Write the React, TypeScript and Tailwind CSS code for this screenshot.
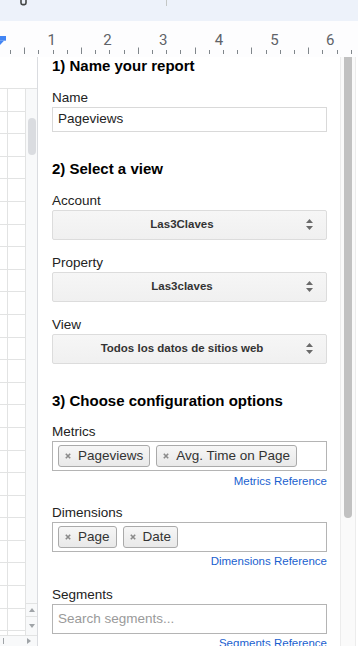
const ticks = Array.from({ length: 25 }, (_, i) => i - 3);
const rows = Array.from({ length: 25 }, (_, i) => i);

function TopStrip() {
  return (
    <div className="flex h-[21px] items-start bg-[#edf2fa]">
      <svg className="ml-[20px]" width="7" height="6" viewBox="0 0 7 6">
        <path d="M1 0V3Q1 4.6 2.6 4.6H4.4Q6 4.6 6 3V0" fill="none" stroke="#444746" strokeWidth="1.6" />
      </svg>
      <div className="ml-[139px] h-[6px] w-px bg-[#c4c7c5]" />
    </div>
  );
}

function Ruler() {
  return (
    <div className="relative h-[36px] bg-[#fdfdfe]">
      <svg className="absolute left-0 top-0" width="358" height="36">
        <path d="M0 15H6V19.7H0Z" fill="#4285f4" />
        <path d="M0 19.7H4L0 24Z" fill="#4285f4" />
        {ticks.map((k) => {
          const x = Math.round(52.5 + 14.2 * k) + 0.5;
          const tall = ((k % 4) + 4) % 4 === 2;
          return <line key={k} x1={x} x2={x} y1={tall ? 26.5 : 29} y2={33} stroke="#80868b" />;
        })}
      </svg>
      <div className="relative flex pl-[24px] pt-[10px]">
        {[1, 2, 3, 4, 5, 6].map((n) => (
          <div key={n} className="w-[56.8px] text-center font-['Roboto',Arial,sans-serif] text-[15px] leading-[18px] text-[#5f6368]">
            {n}
          </div>
        ))}
      </div>
    </div>
  );
}

function Sheet() {
  return (
    <div className="flex w-[38px] flex-col border-r border-[#dadce0]">
      <div className="h-[31px]" />
      <div className="flex h-[547px] overflow-hidden">
        <div className="flex w-[25px] flex-col">
          {rows.map((r) => (
            <div key={r} className="flex h-[22.6px] shrink-0 border-t border-[#e2e3e3]">
              <div className="w-[8px] border-r border-[#e2e3e3]" />
            </div>
          ))}
        </div>
        <div className="flex w-[12px] flex-col border-l border-t border-[#e2e3e3] bg-[#f8f9fa]">
          <div className="ml-[2px] mt-[29px] h-[37px] w-[8px] rounded-full bg-[#dadce0]" />
          <div className="flex-1" />
          <div className="flex h-[14px] items-center justify-center border-y border-[#e2e3e3]">
            <svg width="6" height="4" viewBox="0 0 6 4"><path d="M3 0L6 4H0Z" fill="#a0a4a8" /></svg>
          </div>
          <div className="flex h-[18px] items-center justify-center">
            <svg width="6" height="4" viewBox="0 0 6 4"><path d="M0 0H6L3 4Z" fill="#a0a4a8" /></svg>
          </div>
        </div>
      </div>
      <div className="flex h-[11px] items-center border-t border-[#e2e3e3] bg-[#f8f9fa]">
        <div className="ml-[3px] h-[6px] w-px bg-[#a0a4a8]" />
        <svg className="ml-[23px]" width="4" height="6" viewBox="0 0 4 6"><path d="M0 0L4 3L0 6Z" fill="#a0a4a8" /></svg>
      </div>
    </div>
  );
}

function Heading({ children, className }: { children: React.ReactNode; className: string }) {
  return <div className={`text-[15px] font-bold leading-[17px] text-black ${className}`}>{children}</div>;
}

function Label({ children, className }: { children: React.ReactNode; className: string }) {
  return <div className={`text-[13.5px] leading-[15px] text-[#222] ${className}`}>{children}</div>;
}

function SelectBox({ value }: { value: string }) {
  return (
    <div className="relative mt-[2px] flex h-[30px] items-center rounded-[2px] border border-[#dcdcdc] bg-gradient-to-b from-[#f6f6f6] to-[#f0f0f0]">
      <span className="flex-1 pr-[15px] text-center text-[11.5px] font-bold text-[#333]">{value}</span>
      <svg className="absolute right-[13px] top-[8px]" width="7" height="12" viewBox="0 0 7 12">
        <path d="M3.5 0L7 4H0Z M0 7H7L3.5 11Z" fill="#6a6a6a" />
      </svg>
    </div>
  );
}

function Chip({ label }: { label: string }) {
  return (
    <div className="flex h-[22px] items-center gap-[7px] rounded-[3px] border border-[#aaa] bg-gradient-to-b from-[#f6f6f6] to-[#e9e9e9] pl-[6px] pr-[6px] text-[13.5px] text-[#333]">
      <svg width="6" height="6" viewBox="0 0 6 6">
        <path d="M0.8 0.8L5.2 5.2M5.2 0.8L0.8 5.2" stroke="#8a8a8a" strokeWidth="1.6" />
      </svg>
      <span>{label}</span>
    </div>
  );
}

function ChipBox({ items }: { items: string[] }) {
  return (
    <div className="mt-[2px] flex h-[30px] items-center gap-[6px] border border-[#b4b4b4] px-[5px]">
      {items.map((i) => (
        <Chip key={i} label={i} />
      ))}
    </div>
  );
}

function RefLink({ children, className }: { children: React.ReactNode; className: string }) {
  return <div className={`text-right text-[11.5px] leading-[14px] text-[#1a5fcf] ${className}`}>{children}</div>;
}

function Panel() {
  return (
    <div className="flex flex-1">
      <div className="w-[289px] overflow-hidden pl-[14px]">
        <Heading className="">1) Name your report</Heading>
        <Label className="mt-[16px]">Name</Label>
        <div className="mt-[2px] flex h-[25px] items-center border border-[#d9d9d9] pl-[5px] text-[13.5px] text-[#222]">
          Pageviews
        </div>

        <Heading className="mt-[28px]">2) Select a view</Heading>
        <Label className="mt-[16px]">Account</Label>
        <SelectBox value="Las3Claves" />
        <Label className="mt-[15px]">Property</Label>
        <SelectBox value="Las3claves" />
        <Label className="mt-[15px]">View</Label>
        <SelectBox value="Todos los datos de sitios web" />

        <Heading className="mt-[28px]">3) Choose configuration options</Heading>
        <Label className="mt-[15px]">Metrics</Label>
        <ChipBox items={["Pageviews", "Avg. Time on Page"]} />
        <RefLink className="mt-[3px]">Metrics Reference</RefLink>

        <Label className="mt-[17px]">Dimensions</Label>
        <ChipBox items={["Page", "Date"]} />
        <RefLink className="mt-[2px]">Dimensions Reference</RefLink>

        <Label className="mt-[19px]">Segments</Label>
        <div className="mt-[2px] flex h-[30px] items-center border border-[#b4b4b4] pl-[5px] text-[13.5px] text-[#9a9a9a]">
          Search segments...
        </div>
        <RefLink className="mt-[2px]">Segments Reference</RefLink>
      </div>
      <div className="w-[13px]" />
      <div className="w-[16px] border-x border-[#ececec] bg-[#fafafa]">
        <div className="ml-[3px] h-[461px] w-[8px] rounded-b-[4px] bg-[#c1c1c1]" />
      </div>
    </div>
  );
}

export default function App() {
  return (
    <div className="h-[646px] w-[358px] overflow-hidden bg-white font-['Liberation_Sans',Arial,sans-serif]">
      <TopStrip />
      <Ruler />
      <div className="flex h-[589px]">
        <Sheet />
        <Panel />
      </div>
    </div>
  );
}
